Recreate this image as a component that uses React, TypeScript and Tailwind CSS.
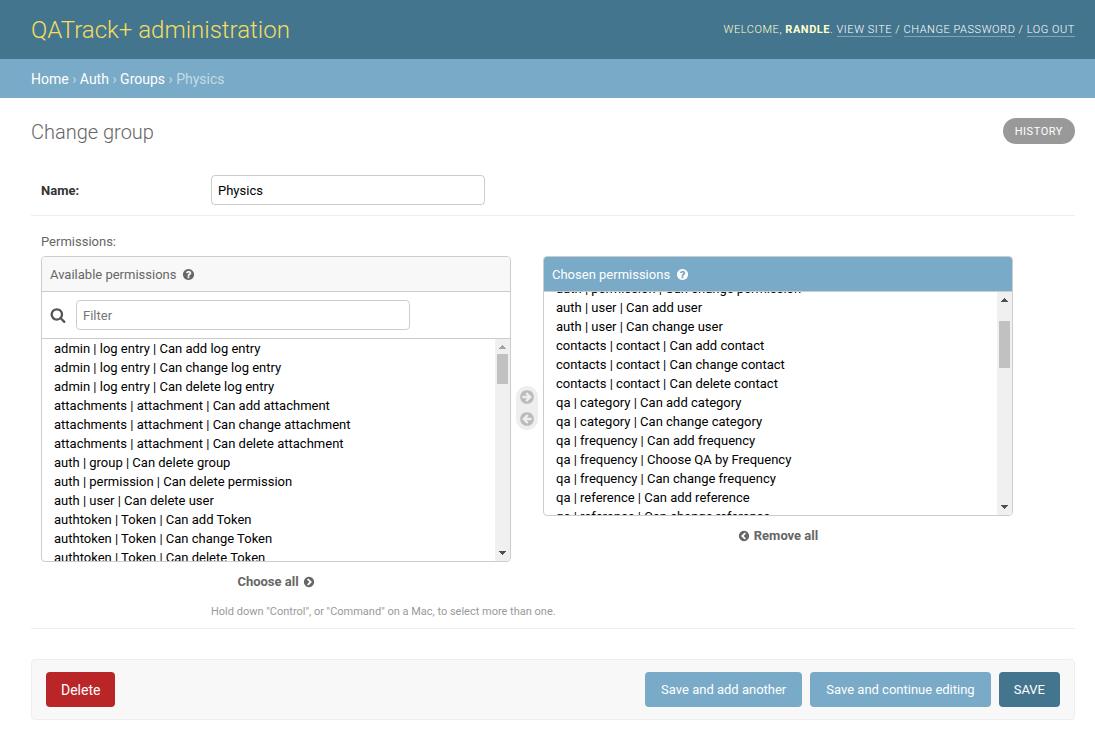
import React, { useEffect, useRef } from "react";

const available = [
    "admin | log entry | Can add log entry",
    "admin | log entry | Can change log entry",
    "admin | log entry | Can delete log entry",
    "attachments | attachment | Can add attachment",
    "attachments | attachment | Can change attachment",
    "attachments | attachment | Can delete attachment",
    "auth | group | Can delete group",
    "auth | permission | Can delete permission",
    "auth | user | Can delete user",
    "authtoken | Token | Can add Token",
    "authtoken | Token | Can change Token",
    "authtoken | Token | Can delete Token",
    "contenttypes | content type | Can add content type",
    "contenttypes | content type | Can change content type",
    "contenttypes | content type | Can delete content type",
];

const chosen = [
    "auth | group | Can add group",
    "auth | group | Can change group",
    "auth | permission | Can add permission",
    "auth | permission | Can change permission",
    "auth | user | Can add user",
    "auth | user | Can change user",
    "contacts | contact | Can add contact",
    "contacts | contact | Can change contact",
    "contacts | contact | Can delete contact",
    "qa | category | Can add category",
    "qa | category | Can change category",
    "qa | frequency | Can add frequency",
    "qa | frequency | Choose QA by Frequency",
    "qa | frequency | Can change frequency",
    "qa | reference | Can add reference",
    "qa | reference | Can change reference",
    "qa | tolerance | Can add tolerance",
    "qa | tolerance | Can change tolerance",
];

export default function App() {
    return (
        <div className="min-h-screen bg-white font-['Roboto',sans-serif] text-[13px] text-[#333]">
            <header className="flex items-center justify-between bg-[#44758e] py-[14px] pr-5 pl-[31px] text-[#ffc]">
                <h1 className="pt-0.5 text-2xl leading-[29px] font-light text-[#f5dd5d]">QATrack+ administration</h1>
                <div className="text-[11px] leading-[14px] font-light tracking-wider uppercase">
                    Welcome, <strong className="font-bold">Randle</strong>.{" "}
                    <HeaderLink>View site</HeaderLink> / <HeaderLink>Change password</HeaderLink> /{" "}
                    <HeaderLink>Log out</HeaderLink>
                </div>
            </header>
            <nav aria-label="Breadcrumbs" className="bg-[#79aac7] pt-[11px] pr-5 pb-[9px] pl-[31px] text-sm leading-[19px] text-[#c4dce8]">
                <a href="#" className="text-white">Home</a> › <a href="#" className="text-white">Auth</a> ›{" "}
                <a href="#" className="text-white">Groups</a> › Physics
            </nav>

            <main className="pt-5 pr-5 pl-[31px]">
                <div className="mb-[21px] flex items-center justify-between">
                    <h2 className="pt-0.5 text-xl leading-6 font-light text-[#666]">Change group</h2>
                    <a href="#" className="rounded-full bg-[#999] px-3 pt-0.5 text-[11px] leading-6 tracking-wider text-white uppercase">
                        History
                    </a>
                </div>

                <form onSubmit={(e) => e.preventDefault()}>
                    <div className="flex items-center border-b border-[#eee] p-[10px] pr-0">
                        <label htmlFor="name" className="w-[170px] pt-0.5 font-bold">Name:</label>
                        <input
                            id="name"
                            defaultValue="Physics"
                            className="h-[30px] w-[274px] rounded border border-[#ccc] px-1.5 text-black"
                        />
                    </div>

                    <div className="border-b border-[#eee] pt-4 pb-2 pl-[10px]">
                        <label htmlFor="available" className="mb-1 block leading-5 text-[#666]">Permissions:</label>
                        <div className="flex max-w-[972px] items-start">
                            <div className="min-w-0 flex-1">
                                <div className="overflow-hidden rounded border border-[#ccc]">
                                    <h3 className="flex items-center gap-1.5 border-b border-[#ccc] bg-[#f8f8f8] px-2 leading-8 text-[#666]">
                                        <span className="pt-0.5">Available permissions</span>
                                        <Icon d={QUESTION} className="size-[13px]" />
                                    </h3>
                                    <div className="flex items-center gap-2.5 border-b border-[#ccc] p-2">
                                        <label htmlFor="filter" aria-label="Filter">
                                            <Icon d={SEARCH} className="size-4 text-[#555]" />
                                        </label>
                                        <input
                                            id="filter"
                                            placeholder="Filter"
                                            className="h-[30px] w-[334px] rounded border border-[#ccc] px-1.5 placeholder:text-[#757575]"
                                        />
                                    </div>
                                    <PermissionList id="available" label="Available permissions" items={available} />
                                </div>
                                <SelectorLink>
                                    Choose all <Icon d={CHEVRON} className="size-3" />
                                </SelectorLink>
                            </div>

                            <div className="mx-[5px] mt-[130px] flex h-11 w-[22px] flex-col items-center justify-center gap-1.5 rounded-full bg-[#eee] text-[#bbb]">
                                <button type="button" aria-label="Choose">
                                    <Icon d={ARROW} className="size-4" />
                                </button>
                                <button type="button" aria-label="Remove">
                                    <Icon d={ARROW} className="size-4 rotate-180" />
                                </button>
                            </div>

                            <div className="min-w-0 flex-1">
                                <div className="overflow-hidden rounded border border-[#ccc]">
                                    <h3 className="flex items-center gap-1.5 border-b border-[#ccc] bg-[#79aac7] px-2 leading-8 text-white">
                                        <span className="pt-0.5">Chosen permissions</span>
                                        <Icon d={QUESTION} className="size-[13px]" />
                                    </h3>
                                    <PermissionList id="chosen" label="Chosen permissions" items={chosen} scrolled />
                                </div>
                                <SelectorLink>
                                    <Icon d={CHEVRON} className="size-3 rotate-180" /> Remove all
                                </SelectorLink>
                            </div>
                        </div>
                        <p className="mt-[13px] pl-[170px] text-[11px] leading-4 text-[#999]">
                            Hold down "Control", or "Command" on a Mac, to select more than one.
                        </p>
                    </div>

                    <div className="mt-[30px] flex items-center gap-2 rounded border border-[#eee] bg-[#f8f8f8] px-[14px] py-3 text-white">
                        <a href="#" className="mr-auto rounded bg-[#ba2527] px-[15px] pt-0.5 text-sm leading-[33px]">Delete</a>
                        <button className="rounded bg-[#79aac7] px-4 leading-[35px]">Save and add another</button>
                        <button className="rounded bg-[#79aac7] px-4 leading-[35px]">Save and continue editing</button>
                        <button className="rounded bg-[#44758e] px-[15px] leading-[35px] uppercase">Save</button>
                    </div>
                </form>
            </main>
        </div>
    );
}

const HeaderLink = ({ children }: { children: React.ReactNode }) => (
    <a href="#" className="border-b border-white/35 text-white">{children}</a>
);

const SelectorLink = ({ children }: { children: React.ReactNode }) => (
    <div className="mt-[11px] flex justify-center">
        <button type="button" className="flex items-center gap-1 leading-[18px] font-bold text-[#666]">
            {children}
        </button>
    </div>
);

const PermissionList = ({
    id,
    label,
    items,
    scrolled = false,
}: {
    id: string;
    label: string;
    items: string[];
    scrolled?: boolean;
}) => {
    const ref = useRef<HTMLSelectElement>(null);

    useEffect(() => {
        if (scrolled && ref.current) ref.current.scrollTop = 70;
    }, [scrolled]);

    return (
        <div className={scrolled ? "flex h-[223px]" : "flex h-[222px]"}>
            <select
                ref={ref}
                id={id}
                multiple
                aria-label={label}
                className="h-full min-w-0 flex-1 px-[10px] text-black outline-none [scrollbar-width:none]"
            >
                {items.map((item) => (
                    <option key={item} className="h-[19px] px-0.5 pt-0.5 pb-0">{item}</option>
                ))}
            </select>
            {/* Scrollbar */}
            <div aria-hidden="true" className="flex w-[15px] flex-col items-center bg-[#f0f0f0]">
                <Caret className={scrolled ? "text-[#505050]" : "text-[#a3a3a3]"} />
                <div className={scrolled ? "mt-[14px] h-[47px] w-[11px] bg-[#c1c1c1]" : "h-[30px] w-[11px] bg-[#c1c1c1]"} />
                <Caret className="mt-auto rotate-180 text-[#505050]" />
            </div>
        </div>
    );
};

const Caret = ({ className }: { className: string }) => (
    <svg viewBox="0 0 15 15" fill="currentColor" shapeRendering="crispEdges" className={`size-[15px] ${className}`}>
        <path d="M7 6h1v1h1v1h1v1h1v1H4V9h1V8h1V7h1z" />
    </svg>
);

const CIRCLE =
    "q0 209-103 385.5t-279.5 279.5-385.5 103-385.5-103-279.5-279.5-103-385.5 103-385.5 279.5-279.5 385.5-103 385.5 103 279.5 279.5 103 385.5z";
const ARROW =
    "M1413 896q0-27-18-45l-91-91-362-362q-18-18-45-18t-45 18l-91 91q-18 18-18 45t18 45l189 189h-502q-26 0-45 19t-19 45v128q0 26 19 45t45 19h502l-189 189q-19 19-19 45t19 45l91 91q18 18 45 18t45-18l362-362 91-91q18-18 18-45zm251 0" + CIRCLE;
const CHEVRON =
    "M845 1395l454-454q19-19 19-45t-19-45l-454-454q-19-19-45-19t-45 19l-102 102q-19 19-19 45t19 45l307 307-307 307q-19 19-19 45t19 45l102 102q19 19 45 19t45-19zm819-499" + CIRCLE;
const QUESTION =
    "M1024 1376v-192q0-14-9-23t-23-9h-192q-14 0-23 9t-9 23v192q0 14 9 23t23 9h192q14 0 23-9t9-23zm256-672q0-88-55.5-163t-138.5-116-170-41q-243 0-371 213-15 24 8 42l132 100q7 6 19 6 16 0 25-12 53-68 86-92 34-24 86-24 48 0 85.5 26t37.5 59q0 38-20 61t-68 45q-63 28-115.5 86.5t-52.5 125.5v36q0 14 9 23t23 9h192q14 0 23-9t9-23q0-19 21.5-49.5t54.5-49.5q32-18 49-28.5t46-35 44.5-48 28-60.5 12.5-81zm384 192" + CIRCLE;
const SEARCH =
    "M1216 832q0-185-131.5-316.5t-316.5-131.5-316.5 131.5-131.5 316.5 131.5 316.5 316.5 131.5 316.5-131.5 131.5-316.5zm512 832q0 52-38 90t-90 38q-54 0-90-38l-343-342q-179 124-399 124-143 0-273.5-55.5t-225-150-150-225-55.5-273.5 55.5-273.5 150-225 225-150 273.5-55.5 273.5 55.5 225 150 150 225 55.5 273.5q0 220-124 399l343 343q37 37 37 90z";

const Icon = ({ d, className }: { d: string; className?: string }) => (
    <svg xmlns="http://www.w3.org/2000/svg" viewBox="0 0 1792 1792" fill="currentColor" aria-hidden="true" className={className}>
        <path d={d} />
    </svg>
);
